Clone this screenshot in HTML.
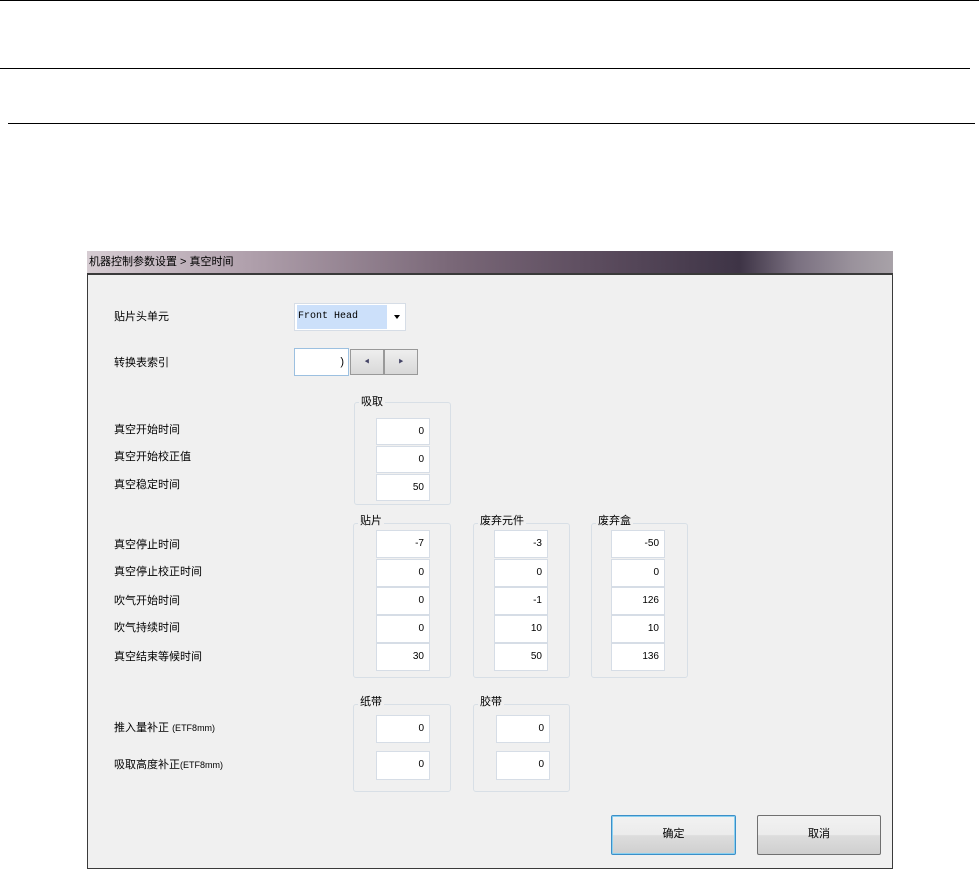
<!DOCTYPE html>
<html><head><meta charset="utf-8"><style>
*{margin:0;padding:0;box-sizing:border-box}
body{width:979px;height:869px;background:#fff;position:relative;overflow:hidden;font-family:"Liberation Sans","Noto Sans CJK SC",sans-serif;font-size:11px;color:#000}
.a{position:absolute}
.hl{position:absolute;height:1px;background:#000}
.title{left:87px;top:251px;width:806px;height:23px;background:linear-gradient(90deg,#d6ccd2 0%,#b0a0ac 20%,#7a6878 45%,#5e4e60 62%,#3e3446 81%,#7a7080 88%,#9a929c 95%,#a8a2a8 100%);font-size:11px;line-height:23px;padding-left:2px;color:#000}
.body{left:87px;top:273px;width:806px;height:596px;background:#f0f0f0;border:1px solid #3a3a3a;border-top:2px solid #3a3a3a}
.lbl{position:absolute;font-size:11px;white-space:nowrap;line-height:14px}
.in{position:absolute;background:#fff;border:1px solid #d6dde6;text-align:right;padding-right:5px;font-size:10px;line-height:25px}
.grp{position:absolute;border:1px solid #d8dfe6;border-radius:3px}
.gt{position:absolute;background:#f0f0f0;padding:0 2px;font-size:11px;line-height:13px}
.btn{position:absolute;border:1px solid #707070;border-radius:2px;background:linear-gradient(#f2f2f2 0%,#ebebeb 50%,#dddddd 51%,#cfcfcf 100%);text-align:center;line-height:37px;font-size:11px}
</style></head><body>
<div class="hl" style="left:0;top:0;width:979px"></div>
<div class="hl" style="left:0;top:68px;width:970px"></div>
<div class="hl" style="left:8px;top:123px;width:967px"></div>

<div class="a title">机器控制参数设置 &gt; 真空时间</div>
<div class="a body"></div>

<div class="lbl" style="left:114px;top:310px">贴片头单元</div>
<div class="a" style="left:294px;top:303px;width:112px;height:28px;background:#fff;border:1px solid #d6dde6"></div>
<div class="a" style="left:297px;top:305px;width:90px;height:24px;background:#cce0fa;font-family:'Liberation Mono',monospace;font-size:10px;line-height:24px;padding-left:1px">Front Head</div>
<div class="a" style="left:394px;top:315px;width:0;height:0;border-left:3.5px solid transparent;border-right:3.5px solid transparent;border-top:4px solid #000"></div>

<div class="lbl" style="left:114px;top:356px">转换表索引</div>
<div class="a" style="left:294px;top:348px;width:55px;height:28px;background:#fff;border:1px solid #9cc0e0;text-align:right;padding-right:4px;line-height:26px;font-size:11px">)</div>
<div class="a" style="left:350px;top:349px;width:34px;height:26px;border:1px solid #999;background:linear-gradient(#eee,#d8d8d8);font-size:5px;text-align:center;line-height:24px;color:#446">◀</div>
<div class="a" style="left:384px;top:349px;width:34px;height:26px;border:1px solid #999;background:linear-gradient(#eee,#d8d8d8);font-size:5px;text-align:center;line-height:24px;color:#446">▶</div>

<div class="grp" style="left:354px;top:402px;width:97px;height:103px"></div>
<div class="gt" style="left:359px;top:396px">吸取</div>
<div class="in" style="left:376px;top:418px;width:54px;height:27px">0</div>
<div class="in" style="left:376px;top:446px;width:54px;height:27px">0</div>
<div class="in" style="left:376px;top:474px;width:54px;height:27px">50</div>
<div class="lbl" style="left:114px;top:423px">真空开始时间</div>
<div class="lbl" style="left:114px;top:450px">真空开始校正值</div>
<div class="lbl" style="left:114px;top:478px">真空稳定时间</div>

<div class="grp" style="left:353px;top:523px;width:98px;height:155px"></div>
<div class="gt" style="left:358px;top:515px">贴片</div>
<div class="grp" style="left:473px;top:523px;width:97px;height:155px"></div>
<div class="gt" style="left:478px;top:515px">废弃元件</div>
<div class="grp" style="left:591px;top:523px;width:97px;height:155px"></div>
<div class="gt" style="left:596px;top:515px">废弃盒</div>

<div class="in" style="left:376px;top:530px;width:54px;height:28px">-7</div>
<div class="in" style="left:376px;top:559px;width:54px;height:28px">0</div>
<div class="in" style="left:376px;top:587px;width:54px;height:28px">0</div>
<div class="in" style="left:376px;top:615px;width:54px;height:28px">0</div>
<div class="in" style="left:376px;top:643px;width:54px;height:28px">30</div>

<div class="in" style="left:494px;top:530px;width:54px;height:28px">-3</div>
<div class="in" style="left:494px;top:559px;width:54px;height:28px">0</div>
<div class="in" style="left:494px;top:587px;width:54px;height:28px">-1</div>
<div class="in" style="left:494px;top:615px;width:54px;height:28px">10</div>
<div class="in" style="left:494px;top:643px;width:54px;height:28px">50</div>

<div class="in" style="left:611px;top:530px;width:54px;height:28px">-50</div>
<div class="in" style="left:611px;top:559px;width:54px;height:28px">0</div>
<div class="in" style="left:611px;top:587px;width:54px;height:28px">126</div>
<div class="in" style="left:611px;top:615px;width:54px;height:28px">10</div>
<div class="in" style="left:611px;top:643px;width:54px;height:28px">136</div>

<div class="lbl" style="left:114px;top:538px">真空停止时间</div>
<div class="lbl" style="left:114px;top:565px">真空停止校正时间</div>
<div class="lbl" style="left:114px;top:594px">吹气开始时间</div>
<div class="lbl" style="left:114px;top:621px">吹气持续时间</div>
<div class="lbl" style="left:114px;top:650px">真空结束等候时间</div>

<div class="grp" style="left:353px;top:704px;width:98px;height:88px"></div>
<div class="gt" style="left:358px;top:696px">纸带</div>
<div class="grp" style="left:473px;top:704px;width:97px;height:88px"></div>
<div class="gt" style="left:478px;top:696px">胶带</div>
<div class="in" style="left:376px;top:715px;width:54px;height:28px">0</div>
<div class="in" style="left:376px;top:751px;width:54px;height:29px">0</div>
<div class="in" style="left:496px;top:715px;width:54px;height:28px">0</div>
<div class="in" style="left:496px;top:751px;width:54px;height:29px">0</div>
<div class="lbl" style="left:114px;top:721px">推入量补正 <span style="font-size:9px">(ETF8mm)</span></div>
<div class="lbl" style="left:114px;top:758px">吸取高度补正<span style="font-size:9px">(ETF8mm)</span></div>

<div class="btn" style="left:611px;top:815px;width:125px;height:40px;border-color:#3c8fc8;box-shadow:inset 0 0 0 1px #8ad0f0">确定</div>
<div class="btn" style="left:757px;top:815px;width:124px;height:40px">取消</div>
</body></html>
